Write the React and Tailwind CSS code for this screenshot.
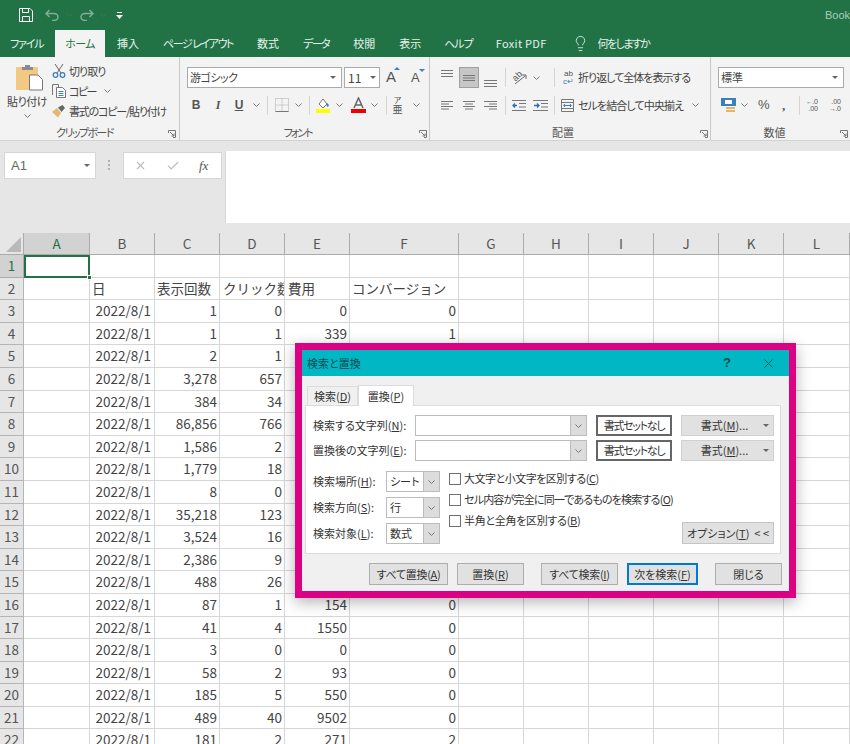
import { X, Check, Lightbulb } from "lucide-react";

const columns = ["A", "B", "C", "D", "E", "F", "G", "H", "I", "J", "K", "L"];

const sheetRows = [
  [1, 0, 0, 0],
  [1, 1, 339, 1],
  [2, 1, "", ""],
  ["3,278", 657, "", ""],
  [384, 34, "", ""],
  ["86,856", 766, "", ""],
  ["1,586", 2, "", ""],
  ["1,779", 18, "", ""],
  [8, 0, "", ""],
  ["35,218", 123, "", ""],
  ["3,524", 16, "", ""],
  ["2,386", 9, "", ""],
  [488, 26, "", ""],
  [87, 1, 154, 0],
  [41, 4, 1550, 0],
  [3, 0, 0, 0],
  [58, 2, 93, 0],
  [185, 5, 550, 0],
  [489, 40, 9502, 0],
  [181, 2, 271, 2],
];

const tabs = [
  { name: "挿入", cls: "ml-[12px]" },
  { name: "ページ レイアウト", cls: "ml-[24px] tracking-[-1.45px]" },
  { name: "数式", cls: "ml-[24px]" },
  { name: "データ", cls: "ml-[24px] tracking-[-1.5px]" },
  { name: "校閲", cls: "ml-[24px]" },
  { name: "表示", cls: "ml-[24px]" },
  { name: "ヘルプ", cls: "ml-[23px] tracking-[-1px]" },
  { name: "Foxit PDF", cls: "ml-[23px] tracking-[0.3px]" },
];

function Chevron({ className = "" }) {
  return (
    <svg width="7" height="4" viewBox="0 0 7 4" fill="none" stroke="#777" className={`shrink-0 ${className}`}>
      <path d="M.5.5 3.500 3.500 6.500.5" />
    </svg>
  );
}

function Caret({ className = "" }) {
  return (
    <svg width="6" height="3" viewBox="0 0 6 3" fill="#666" className={`shrink-0 ${className}`}>
      <path d="M0 0h6L3 3z" />
    </svg>
  );
}

function Launcher({ className = "" }) {
  return (
    <svg width="8" height="8" viewBox="0 0 8 8" fill="none" stroke="#777" className={`absolute bottom-[2px] ${className}`}>
      <path d="M.5 3V.5H7.500V7.500H5M2 2l4 4M6 3.500V6H3.500" />
    </svg>
  );
}

function Sep({ className = "" }) {
  return <span className={`block w-px h-[19px] bg-[#d4d4d4] shrink-0 ${className}`} />;
}

// text alignment glyph, three or four grey lines
function Lines({ d, h = 10, w = 13, className = "" }) {
  return (
    <svg width={w} height={h} viewBox={`0 0 ${w} ${h}`} fill="none" stroke="#777" className={`shrink-0 ${className}`}>
      <path d={d} />
    </svg>
  );
}

function RibbonLabel({ className = "", children }) {
  return <div className={`h-[15px] flex items-center justify-center text-[11px] leading-none text-[#555] ${className}`}>{children}</div>;
}

function Clipboard() {
  return (
    <div className="relative w-[180px] shrink-0 border-r border-[#c8c8c8] flex flex-col">
      <div className="h-[68px] flex">
        <div className="w-[54px] shrink-0 flex flex-col items-center pt-[7px]">
          <svg width="27" height="27" viewBox="0 0 27 27" className="ml-[4px]">
            <rect x="0" y="3" width="22" height="23" rx="1" fill="#f1c983" />
            <path d="M6 3h3V1h5v2h3v3H6z" fill="#8a8a8a" />
            <path d="M13.500 11H22l4.500 4.500V26h-13z" fill="#fff" stroke="#777" />
          </svg>
          <span className="mt-[2px] text-[11px] leading-[16px] text-[#444] tracking-[-0.5px]">貼り付け</span>
          <Chevron className="mt-[5px]" />
        </div>
        <div className="pt-[4px] -ml-[2px] flex flex-col">
          <div className="h-[20px] flex items-center">
            <svg width="14" height="14" viewBox="0 0 14 14" fill="none" stroke="#666" className="shrink-0">
              <path d="M3 0l6 9M11 0 5 9" />
              <circle cx="3.500" cy="11" r="2.300" stroke="#3c7fc0" strokeWidth="1.300" />
              <circle cx="10.500" cy="11" r="2.300" stroke="#3c7fc0" strokeWidth="1.300" />
            </svg>
            <span className="ml-[3px] text-[11px] text-[#444] whitespace-nowrap tracking-[-1px]">切り取り</span>
          </div>
          <div className="h-[20px] flex items-center">
            <svg width="14" height="14" viewBox="0 0 14 14" fill="none" stroke="#777" className="shrink-0">
              <path d="M.5 11V.5h6v3" />
              <path d="M4.500 3.500h6l3 3v7h-9z" fill="#fff" />
              <path d="M6.500 7.500h5M6.500 9.500h5M6.500 11.500h5" stroke="#3c7fc0" />
            </svg>
            <span className="ml-[3px] w-[25px] text-[11px] text-[#444] whitespace-nowrap tracking-[-1.5px]">コピー</span>
            <Chevron className="ml-[10px]" />
          </div>
          <div className="h-[20px] flex items-center">
            <svg width="14" height="13" viewBox="0 0 14 13" className="shrink-0">
              <path d="M0 7l5-4 4 5-3 4.500z" fill="#e3b872" />
              <path d="M6 2.500 10.500 0 13 3 9.500 7z" fill="#666" />
            </svg>
            <span className="ml-[3px] text-[11px] text-[#444] whitespace-nowrap tracking-[-1.2px]">書式のコピー/貼り付け</span>
          </div>
        </div>
      </div>
      <RibbonLabel className="tracking-[-1.6px] pr-[10px]">クリップボード</RibbonLabel>
      <Launcher className="right-[3px]" />
    </div>
  );
}

function FontGroup() {
  return (
    <div className="relative w-[250px] shrink-0 border-r border-[#c8c8c8] flex flex-col">
      <div className="h-[68px] pl-[7px] pt-[10px]">
        <div className="flex items-center h-[21px]">
          <div className="w-[155px] h-[21px] bg-white border border-[#ababab] flex items-center px-[2px] text-[11px] text-[#444] tracking-[-0.5px]">
            游ゴシック
            <Caret className="ml-auto mr-[3px]" />
          </div>
          <div className="ml-[2px] w-[36px] h-[21px] bg-white border border-[#ababab] flex items-center pl-[3px] text-[12px] text-[#444]">
            11
            <Caret className="ml-auto mr-[3px]" />
          </div>
          <span className="ml-[6px] relative w-[12px] text-[15px] font-['Liberation_Sans',sans-serif] text-[#555]">
            A
            <span className="absolute top-[1px] -right-[2px] w-0 h-0 border-x-[3px] border-x-transparent border-b-[3px] border-b-[#3c7fc0]" />
          </span>
          <span className="ml-[13px] relative w-[12px] text-[13px] font-['Liberation_Sans',sans-serif] text-[#555]">
            A
            <span className="absolute top-[1px] -right-[2px] w-0 h-0 border-x-[3px] border-x-transparent border-t-[3px] border-t-[#3c7fc0]" />
          </span>
        </div>
        <div className="mt-[7px] h-[20px] flex items-center text-[#555] text-[12px] font-['Liberation_Sans',sans-serif]">
          <span className="ml-[4px] w-[10px] text-center font-bold">B</span>
          <span className="ml-[12px] w-[10px] text-center italic font-['Liberation_Serif',serif] font-bold">I</span>
          <span className="ml-[11px] w-[10px] text-center underline font-bold">U</span>
          <Chevron className="ml-[9px]" />
          <Sep className="ml-[7px]" />
          <svg width="14" height="14" viewBox="0 0 14 14" fill="none" stroke="#aaa" strokeDasharray="1 1" className="ml-[7px] shrink-0">
            <path d="M.5.500h13v13H.5zM7 .5v13M.5 7h13" />
            <path d="M.5 13.500h13" stroke="#777" strokeDasharray="0" />
          </svg>
          <Chevron className="ml-[6px]" />
          <Sep className="ml-[7px]" />
          <svg width="14" height="16" viewBox="0 0 14 16" className="ml-[6px] shrink-0">
            <path d="M3 7l4-5 4 5-4 4z" fill="#fff" stroke="#777" />
            <path d="M11 6l2 2-1 2-1.500-1z" fill="#3c7fc0" />
            <rect x="0" y="12" width="14" height="4" fill="#ffff00" />
          </svg>
          <Chevron className="ml-[6px]" />
          <svg width="15" height="16" viewBox="0 0 15 16" className="ml-[8px] shrink-0">
            <path d="M3 11 7.500 1 12 11M5 8h5" fill="none" stroke="#666" strokeWidth="1.500" />
            <rect x="0" y="12" width="15" height="4" fill="#f00000" />
          </svg>
          <Chevron className="ml-[5px]" />
          <Sep className="ml-[8px]" />
          <span className="ml-[5px] w-[11px] flex flex-col items-center text-[8px] leading-[8px] [font-family:'Noto_Sans_CJK_JP',sans-serif]">
            <span>ア</span>
            <span className="text-[10px] leading-[10px]">亜</span>
          </span>
          <Chevron className="ml-[10px]" />
        </div>
      </div>
      <RibbonLabel className="tracking-[-2px] pr-[14px]">フォント</RibbonLabel>
      <Launcher className="right-[2px]" />
    </div>
  );
}

function AlignGroup() {
  return (
    <div className="relative w-[281px] shrink-0 border-r border-[#c8c8c8] flex flex-col">
      <div className="h-[68px] pl-[11px] pt-[10px]">
        <div className="flex items-center h-[21px]">
          <Lines w={12} d="M0 1.500h12M0 4.500h12M0 7.500h12" className="self-start mt-[2px]" />
          <div className="ml-[6px] w-[20px] h-[21px] bg-[#c6c6c6] border border-[#a0a0a0] flex items-center justify-center shrink-0">
            <Lines w={12} d="M0 2.500h12M0 5h12M0 7.500h12" />
          </div>
          <Lines d="M0 2.500h13M0 5.500h13M0 8.500h13" className="ml-[5px] self-end" />
          <Sep className="ml-[8px]" />
          <span className="ml-[6px] relative w-[15px] h-[14px] shrink-0">
            <span className="absolute left-0 top-0 text-[9px] leading-[10px] text-[#555] -rotate-45 font-['Liberation_Sans',sans-serif]">ab</span>
            <svg width="15" height="14" viewBox="0 0 15 14" fill="none" stroke="#666" className="absolute inset-0">
              <path d="M3 13 13 5M10 4h4v4" />
            </svg>
          </span>
          <Chevron className="ml-[6px]" />
          <Sep className="ml-[14px]" />
          <span className="ml-[8px] w-[11px] text-[8px] leading-[8px] text-[#555] text-center font-['Liberation_Sans',sans-serif]">
            ab
            <br />
            <span className="text-[#3c7fc0]">c↵</span>
          </span>
          <span className="ml-[4px] text-[11px] text-[#444] whitespace-nowrap tracking-[-1px]">折り返して全体を表示する</span>
        </div>
        <div className="mt-[7px] h-[20px] flex items-center">
          <Lines w={12} d="M0 1.500h12M0 4h8M0 6.500h12M0 9h8" />
          <Lines w={12} d="M0 1.500h12M2 4h8M0 6.500h12M2 9h8" className="ml-[10px]" />
          <Lines d="M0 1.500h13M5 4h8M0 6.500h13M5 9h8" className="ml-[9px]" />
          <Sep className="ml-[8px]" />
          <svg width="14" height="11" viewBox="0 0 14 11" fill="none" stroke="#777" className="ml-[6px] shrink-0">
            <path d="M0 .5h14M7 3.500h7M7 7h7M0 10.500h14" />
            <path d="M5 5.500H1M3 3.500l-2 2 2 2" stroke="#2a6fb5" strokeWidth="1.300" />
          </svg>
          <svg width="15" height="11" viewBox="0 0 15 11" fill="none" stroke="#777" className="ml-[7px] shrink-0">
            <path d="M0 .5h15M8 3.500h7M8 7h7M0 10.500h15" />
            <path d="M1 5.500h5M4 3.500l2 2-2 2" stroke="#2a6fb5" strokeWidth="1.300" />
          </svg>
          <Sep className="ml-[6px]" />
          <svg width="13" height="13" viewBox="0 0 13 13" fill="none" stroke="#777" className="ml-[6px] shrink-0">
            <path d="M.5.500h12v12H.5zM.5 3.500h12M.5 9.500h12" />
            <path d="M3 6.500h7M4 5l-1.500 1.500L4 8M9 5l1.500 1.500L9 8" stroke="#3c7fc0" />
          </svg>
          <span className="ml-[4px] w-[105px] text-[11px] text-[#444] whitespace-nowrap tracking-[-0.9px]">セルを結合して中央揃え</span>
          <Chevron className="ml-[9px]" />
        </div>
      </div>
      <RibbonLabel className="pr-[14px]">配置</RibbonLabel>
      <Launcher className="right-[2px]" />
    </div>
  );
}

function NumberGroup() {
  return (
    <div className="relative flex-1 flex flex-col">
      <div className="h-[68px] pl-[7px] pt-[10px]">
        <div className="w-[126px] h-[21px] bg-white border border-[#ababab] flex items-center px-[2px] text-[11px] text-[#444]">
          標準
          <Caret className="ml-auto mr-[3px]" />
        </div>
        <div className="mt-[7px] h-[20px] flex items-center text-[#555]">
          <svg width="15" height="15" viewBox="0 0 15 15" className="ml-[3px] shrink-0">
            <rect x="0" y="0" width="15" height="8" fill="#3c7fc0" />
            <rect x="4" y="2" width="7" height="4" fill="#fff" />
            <rect x="5" y="9" width="9" height="2" fill="#e8b45f" />
            <rect x="5" y="12" width="9" height="2" fill="#e8b45f" />
          </svg>
          <Chevron className="ml-[5px]" />
          <span className="ml-[10px] w-[12px] text-[13px] font-['Liberation_Sans',sans-serif]">%</span>
          <span className="ml-[12px] w-[5px] text-[13px] font-bold leading-none font-['Liberation_Serif',serif]">,</span>
          <Sep className="ml-[12px]" />
          <span className="relative ml-[6px] w-[12px] h-[14px] text-[7px] leading-[7px] font-['Liberation_Sans',sans-serif] text-right">
            .0
            <br />
            .00
            <span className="absolute left-0 top-0 text-[#2a6fb5]">←</span>
          </span>
          <span className="relative ml-[11px] w-[12px] h-[14px] text-[7px] leading-[7px] font-['Liberation_Sans',sans-serif] text-right">
            .00
            <br />
            .0
            <span className="absolute left-0 top-[7px] text-[#2a6fb5]">→</span>
          </span>
        </div>
      </div>
      <RibbonLabel className="pr-[12px]">数値</RibbonLabel>
      <Launcher className="right-[2px]" />
    </div>
  );
}

function Sheet() {
  const cell = "border-r border-b border-[#d6d6d6] bg-white overflow-hidden whitespace-nowrap leading-[21px]";
  const rowHead = "border-r border-b border-[#b5b5b5] bg-[#e6e6e6] text-center text-[#555] leading-[21px]";
  return (
    <div className="grid grid-cols-[24px_66px_65px_65px_65px_65px_109px_65px_65px_65px_65px_65px_66px] grid-rows-[22px] auto-rows-[22.6px] text-[13.5px] text-[#444] [font-feature-settings:normal]">
      {/* header row */}
      <div className="h-[22px] bg-[#e6e6e6] border-r border-b border-[#ababab] flex items-end justify-end p-[2px]">
        <span className="w-0 h-0 border-l-[15px] border-l-transparent border-b-[15px] border-b-[#b9b9b9]" />
      </div>
      {columns.map((c, i) => (
        <div
          key={c}
          className={`h-[22px] border-r border-b border-[#ababab] text-center leading-[20px] ${
            i === 0 ? "bg-[#d2d2d2] text-[#217346]" : "bg-[#e6e6e6] text-[#555]"
          }`}
        >
          {c}
        </div>
      ))}

      {/* row 1 */}
      <div className="bg-[#d2d2d2] border-r border-b border-[#ababab] text-center text-[#217346] leading-[21px]">1</div>
      <div className={`${cell} relative overflow-visible`}>
        <div className="absolute inset-0 -right-px -bottom-px border-2 border-[#217346]" />
        <div className="absolute -right-[3px] -bottom-[3px] w-[5px] h-[5px] bg-[#217346] border border-white" />
      </div>
      {columns.slice(1).map((c) => (
        <div key={c} className={cell} />
      ))}

      {/* row 2 */}
      <div className={rowHead}>2</div>
      <div className={cell} />
      <div className={`${cell} pl-[2px]`}>日</div>
      <div className={`${cell} pl-[2px]`}>表示回数</div>
      <div className={`${cell} pl-[3px]`}>クリック数</div>
      <div className={`${cell} pl-[3px]`}>費用</div>
      <div className={`${cell} pl-[2px]`}>コンバージョン</div>
      {columns.slice(6).map((c) => (
        <div key={c} className={cell} />
      ))}

      {sheetRows.map((r, i) => (
        <div key={i} className="contents">
          <div className={rowHead}>{i + 3}</div>
          <div className={cell} />
          <div className={`${cell} text-right pr-[3px]`}>2022/8/1</div>
          {r.map((v, j) => (
            <div key={j} className={`${cell} text-right pr-[2px]`}>
              {v}
            </div>
          ))}
          {columns.slice(6).map((c) => (
            <div key={c} className={cell} />
          ))}
        </div>
      ))}
    </div>
  );
}

function DialogButton({ className = "", children }) {
  return (
    <div className={`h-[22px] shrink-0 bg-[#e1e1e1] border border-[#adadad] flex items-center justify-center text-[11px] text-[#333] whitespace-nowrap ${className}`}>
      {children}
    </div>
  );
}

function ComboArrow({ className = "" }) {
  return (
    <span className={`ml-auto h-full w-[16px] bg-[#dcdcdc] border-l border-[#bcbcbc] flex items-center justify-center shrink-0 ${className}`}>
      <Chevron />
    </span>
  );
}

function DialogSelect({ value }) {
  return (
    <div className="w-[54px] h-[21px] bg-white border border-[#bcbcbc] flex items-center pl-[3px] text-[11px] text-[#333]">
      {value}
      <ComboArrow />
    </div>
  );
}

function CheckRow({ className = "", children }) {
  return (
    <div className={`h-[21px] flex items-center text-[11px] text-[#333] whitespace-nowrap ${className}`}>
      <span className="w-[12px] h-[12px] bg-white border border-[#707070] shrink-0" />
      <span className="ml-[3px]">{children}</span>
    </div>
  );
}

function FindRow({ label, hotkey }) {
  return (
    <div className="flex items-center h-[21px]">
      <span className="w-[102px] shrink-0">
        {label}(<u>{hotkey}</u>):
      </span>
      <div className="w-[172px] h-[21px] bg-white border border-[#bcbcbc] flex">
        <ComboArrow />
      </div>
      <DialogButton className="ml-[9px] w-[76px] !h-[21px] !bg-white border-2 !border-[#666] tracking-[-1.3px]">書式セットなし</DialogButton>
      <DialogButton className="relative ml-[9px] w-[93px] !h-[21px] pr-[6px] !border-[#d0d0d0]">
        <span>
          書式(<u>M</u>)...
        </span>
        <Caret className="absolute right-[4px] top-[8px]" />
      </DialogButton>
    </div>
  );
}

function ReplaceDialog() {
  return (
    <div className="absolute left-[295px] top-[343px] w-[501px] h-[255px] border-[7px] border-[#dc0082] shadow-[0_4px_14px_rgba(0,0,0,0.3)] bg-[#f0f0f0]">
      <div className="h-[26px] bg-[#00b7c3] flex items-center pl-[5px] text-[11px] text-[#124a50]">
        検索と置換
        <span className="ml-auto text-[13px] font-bold font-['Liberation_Sans',sans-serif]">?</span>
        <X size={15} strokeWidth={1.5} className="ml-[30px] mr-[13px]" />
      </div>
      <div className="pl-[5px] flex items-end h-[29px] text-[11px] text-[#333]">
        <div className="w-[51px] h-[19px] border border-b-0 border-[#dcdcdc] bg-[#f0f0f0] flex items-center justify-center">
          <span>
            検索(<u>D</u>)
          </span>
        </div>
        <div className="w-[56px] h-[21px] -mb-px z-10 border border-b-0 border-[#dcdcdc] bg-white flex items-center justify-center">
          <span>
            置換(<u>P</u>)
          </span>
        </div>
      </div>
      <div className="ml-[3px] w-[476px] h-[149px] bg-white border border-[#dcdcdc] pl-[7px] pt-[9px] text-[11px] text-[#333]">
        <FindRow label="検索する文字列" hotkey="N" />
        <div className="mt-[4px]">
          <FindRow label="置換後の文字列" hotkey="E" />
        </div>
        <div className="mt-[10px] flex">
          <div className="w-[127px] shrink-0 flex flex-col gap-[5px]">
            <div className="flex items-center">
              <span className="w-[73px] shrink-0">
                検索場所(<u>H</u>):
              </span>
              <DialogSelect value="シート" />
            </div>
            <div className="flex items-center">
              <span className="w-[73px] shrink-0">
                検索方向(<u>S</u>):
              </span>
              <DialogSelect value="行" />
            </div>
            <div className="flex items-center">
              <span className="w-[73px] shrink-0">
                検索対象(<u>L</u>):
              </span>
              <DialogSelect value="数式" />
            </div>
          </div>
          <div className="ml-[9px] -mt-[3px] w-[233px] shrink-0">
            <CheckRow className="tracking-[-0.5px]">
              大文字と小文字を区別する(<u>C</u>)
            </CheckRow>
            <CheckRow className="tracking-[-0.8px]">
              セル内容が完全に同一であるものを検索する(<u>O</u>)
            </CheckRow>
            <CheckRow className="tracking-[-0.3px]">
              半角と全角を区別する(<u>B</u>)
            </CheckRow>
          </div>
          <DialogButton className="self-end w-[92px] !border-[#c4c4c4]">
            <span>
              オプション(<u>T</u>) &nbsp;&lt; &lt;
            </span>
          </DialogButton>
        </div>
      </div>
      <div className="mt-[9px] pl-[67px] flex">
        <DialogButton className="w-[79px] tracking-[-0.3px]">
          <span>
            すべて置換(<u>A</u>)
          </span>
        </DialogButton>
        <DialogButton className="ml-[9px] w-[67px]">
          <span>
            置換(<u>R</u>)
          </span>
        </DialogButton>
        <DialogButton className="ml-[17px] w-[77px] tracking-[-0.3px]">
          <span>
            すべて検索(<u>I</u>)
          </span>
        </DialogButton>
        <DialogButton className="ml-[9px] w-[71px] border-2 !border-[#0078d7]">
          <span>
            次を検索(<u>F</u>)
          </span>
        </DialogButton>
        <DialogButton className="ml-[17px] w-[67px]">閉じる</DialogButton>
      </div>
    </div>
  );
}

export default function App() {
  return (
    <div className="relative w-[850px] h-[744px] overflow-hidden bg-[#e6e6e6] [font-family:'Noto_Sans_CJK_JP','Liberation_Sans',sans-serif] [font-feature-settings:'palt']">
      {/* Title bar */}
      <div className="h-[30px] bg-[#217346] flex items-center pl-[19px] text-white">
        <svg width="14" height="14" viewBox="0 0 14 14" fill="none" stroke="#fff" className="shrink-0">
          <path d="M.5.500h10.500l2.500 2.500v10.500H.5z" />
          <path d="M3.500.5v4h6v-4M3.500 13.500v-5h7v5" />
        </svg>
        <svg width="14" height="12" viewBox="0 0 14 12" fill="none" stroke="#7fae95" strokeWidth="1.500" className="ml-[12px] shrink-0">
          <path d="M4.500 1 1 4.500 4.500 8M1 4.500h8a4 3.500 0 0 1 0 7H7" />
        </svg>
        <Chevron className="ml-[7px] opacity-40" />
        <svg width="14" height="12" viewBox="0 0 14 12" fill="none" stroke="#7fae95" strokeWidth="1.500" className="ml-[7px] shrink-0">
          <path d="M9.500 1 13 4.500 9.500 8M13 4.500H5a4 3.500 0 0 0 0 7h2" />
        </svg>
        <Chevron className="ml-[6px] opacity-40" />
        <svg width="7" height="7" viewBox="0 0 7 7" fill="#fff" className="ml-[9px] shrink-0">
          <path d="M1 0h5v1H1zM0 3h7L3.500 7z" />
        </svg>
        <span className="ml-auto text-[11px] text-[#a9cbb9] font-['Liberation_Sans',sans-serif]">Book</span>
      </div>

      {/* Tabs */}
      <div className="h-[27px] bg-[#217346] flex items-stretch text-[11px] text-[#e8f1ec] whitespace-nowrap">
        <span className="ml-[10px] w-[32px] flex items-center tracking-[-1.2px]">ファイル</span>
        <span className="ml-[13px] w-[50px] bg-[#f3f3f3] text-[#217346] flex items-center justify-center tracking-[-0.7px]">ホーム</span>
        {tabs.map((t) => (
          <span key={t.name} className={`flex items-center ${t.cls}`}>
            {t.name}
          </span>
        ))}
        <Lightbulb size={17} strokeWidth={1.2} className="ml-[25px] self-center" />
        <span className="ml-[9px] flex items-center tracking-[-1.6px]">何をしますか</span>
      </div>

      {/* Ribbon */}
      <div className="h-[84px] bg-[#f3f3f3] border-b border-[#d2d2d2] flex">
        <Clipboard />
        <FontGroup />
        <AlignGroup />
        <NumberGroup />
      </div>

      {/* Formula bar */}
      <div className="h-[92px] flex items-start pt-[10px] pl-[4px]">
        <div className="mt-px w-[92px] h-[27px] bg-white border border-[#d6d6d6] flex items-center pl-[6px] text-[13px] text-[#666] font-['Liberation_Sans',sans-serif]">
          A1
          <Caret className="ml-auto mr-[5px]" />
        </div>
        <span className="ml-[12px] mt-[9px] w-[2px] flex flex-col gap-[2px] shrink-0">
          <span className="h-[2px] bg-[#b0b0b0]" />
          <span className="h-[2px] bg-[#b0b0b0]" />
          <span className="h-[2px] bg-[#b0b0b0]" />
        </span>
        <div className="ml-[13px] mt-px w-[99px] h-[27px] bg-white border border-[#d6d6d6] flex items-center text-[#bbb]">
          <X size={13} className="ml-[10px]" />
          <Check size={14} className="ml-[19px]" />
          <span className="ml-[19px] italic text-[13px] text-[#555] font-['Liberation_Serif',serif]">fx</span>
        </div>
        <div className="ml-[3px] flex-1 h-[72px] bg-white border-l border-[#d6d6d6]" />
      </div>

      <Sheet />
      <ReplaceDialog />
    </div>
  );
}
